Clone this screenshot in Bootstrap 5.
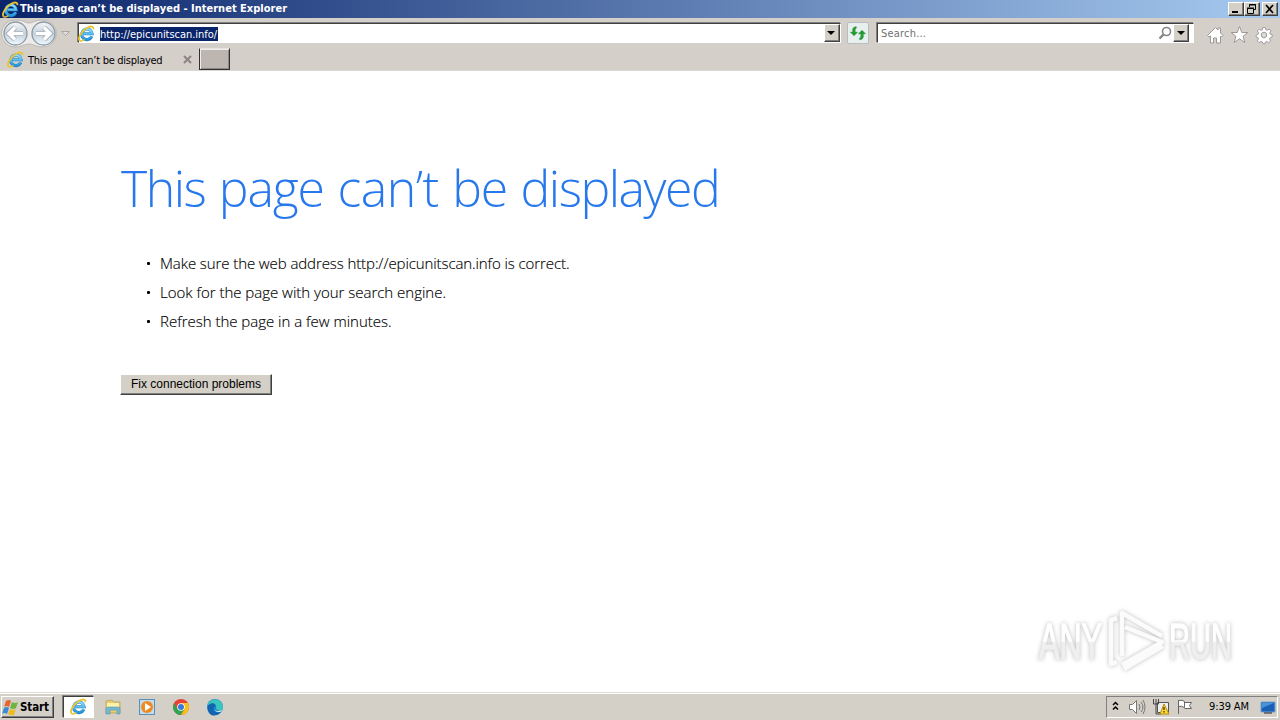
<!DOCTYPE html>
<html lang="en">
<head>
<meta charset="utf-8">
<title>This page can’t be displayed</title>
<link href="https://cdn.jsdelivr.net/npm/bootstrap@5.3.0/dist/css/bootstrap.min.css" rel="stylesheet">
<style>
body{font:11px/14px "DejaVu Sans Condensed","DejaVu Sans",sans-serif;color:#000;background:#fff;overflow:hidden}
svg{display:block;flex:none}
.face{background:#d4d0c8}
.chrome{background:#d5cfca}
.titlebar{height:18px;background:linear-gradient(90deg,#0a246a 0,#a6caf0 100%);color:#fff;padding:0 2px}
.titlebar b{font-size:11px;letter-spacing:.01px;margin-left:1px;white-space:nowrap}
.raised{background:#d4d0c8;border:1px solid;border-color:#fff #404040 #404040 #fff;box-shadow:inset -1px -1px #808080}
.sunken{background:#fff;border:1px solid;border-color:#404040 #fff #fff #404040;box-shadow:-1px -1px #808080}
.capbtn{width:16px;height:14px}
.capclose{margin-left:2px}
.toolbar{height:30px}
.navmenu{width:0}
.navmenu svg{margin-left:-4px}
.address{width:763px;height:20px;margin:1px 0 0 13px}
.address svg{margin-left:-1px}
.address .sel{background:#0a246a;color:#fff;height:14px;line-height:15px;margin:1px 0 0 5px;width:118px;white-space:nowrap;letter-spacing:-.04px}
.drop{width:16px;height:18px}
.refresh{width:22px;height:22px;margin-left:6px;background:#e8efef;border:1px solid #b8bdc0;border-radius:2px}
.search{width:317px;height:20px;margin:1px 0 0 8px;color:#707070;padding-left:3px}
.search span{padding-top:2px;letter-spacing:.2px}
.tabs{height:23px;border-bottom:1px solid #dcd8d4}
.tab-item{width:199px;height:22px;padding-left:7px}
.tabtext{margin-left:4px;padding-top:3px;letter-spacing:-.28px}
.tab-item .closer{margin-right:7px}
.newtab{width:31px;height:22px;background:#bdb5b0;border:1px solid #303030;border-top-color:#e6e2de;box-shadow:inset 1px 1px #eee,inset -1px -1px #908a86}
.viewport{height:621px;padding-left:121px;position:relative}
.headline{font:300 50px/60px "Open Sans","Noto Sans",sans-serif;color:#2778ec;margin:0;padding-top:87px;white-space:nowrap;letter-spacing:-1.5px;word-spacing:2px}
.headline .mid{letter-spacing:-1.15px}
.headline .wide{letter-spacing:-.5px}
.tips{font:300 15px/29px "Open Sans","Noto Sans",sans-serif;margin:31px 0 38px;padding:0 0 0 25px;list-style:none;letter-spacing:-.09px;-webkit-text-stroke:.15px #000}
.tips li+li{letter-spacing:-.01px}
.tips li{display:flex;height:29px;white-space:nowrap}
.tips li::before{content:"";width:3px;height:3px;border-radius:1px;background:#000;margin:13px 10px 0 1px;flex:none}
.fix{width:152px;height:21px;border-radius:0;padding:0;font:12px/17px "Liberation Sans",sans-serif;color:#000;display:block;margin-left:-1px}
.mark-logo{position:absolute;left:1028px;top:529px;overflow:visible}
.mark-logo g{filter:drop-shadow(0 0 2px #bbb)}
.taskbar{height:28px;border-top:1px solid #dedbd6;box-shadow:inset 0 1px #fff;padding:2px 2px 2px 1px}
.start{width:53px;height:22px}
.start b{font-size:11.5px;margin-left:1px;letter-spacing:-.1px}
.running{width:31px;height:22px;margin-left:9px}
.tray{width:172px;height:22px;border:1px solid;border-color:#808080 #fff #fff #808080}
.clock{margin-left:16px;width:42px;white-space:nowrap;letter-spacing:-.1px;padding-top:1px}
</style>
</head>
<body>
<svg width="0" height="0" class="position-absolute">
<defs>
<linearGradient id="eb" x2="0" y2="1"><stop stop-color="#8be0fd"/><stop offset="1" stop-color="#2796dd"/></linearGradient>
<linearGradient id="ball" x2="0" y2="1"><stop stop-color="#f6f8fa"/><stop offset=".5" stop-color="#c5d0da"/><stop offset="1" stop-color="#edf9ff"/></linearGradient>
<symbol id="ie" viewBox="0 0 18 18"><path d="M14.600 12A5.600 5.600 0 1 1 15 9.300H5.800" fill="none" stroke="#2586c8" stroke-width="3.300"/><path d="M14.300 12A5.400 5.400 0 1 1 14.800 9.300H5.800" fill="none" stroke="url(#eb)" stroke-width="2.300"/><path d="M1.800 16.500C-.8 13.800 4 6.200 9.400 3.200c3.500-2.200 7.500-2.400 6.800 1.200" fill="none" stroke="#ecc22d" stroke-width="1.900"/><path d="M1.800 16.500c1.200 1 3.300.2 5-1.100" fill="none" stroke="#ecc22d" stroke-width="1.500"/></symbol>
</defs>
</svg>

<header class="chrome">
<div class="titlebar d-flex align-items-center">
<svg width="17" height="17"><use href="#ie"/></svg><b>This page can’t be displayed - Internet Explorer</b>
<div class="d-flex ms-auto">
<div class="raised capbtn"><svg width="14" height="12"><path d="M3 8h6v2H3z"/></svg></div>
<div class="raised capbtn"><svg width="14" height="12" fill="none" stroke="#000"><path d="M4.500 4V1.500h6v5H9M4 2h7M2.500 5.500h6v5h-6zM2 5h7"/></svg></div>
<div class="raised capbtn capclose"><svg width="14" height="12"><path d="M3 2l7 8M10 2l-7 8" stroke="#000" stroke-width="1.700"/></svg></div>
</div></div>

<div class="toolbar d-flex align-items-start">
<svg width="65" height="30" viewBox="0 18 65 30">
<path d="M15 20C24 20 25 23 29 23s6-3 14-3a13.500 13.500 0 0 1 0 27c-7 0-9-3-14-3s-7 3-14 3a13.500 13.500 0 0 1 0-27" fill="#eeecea" stroke="#bbb7b3"/>
<circle cx="15.500" cy="33.500" r="11.500" fill="url(#ball)" stroke="#8c98a2" stroke-width="1.300"/><circle cx="43.500" cy="33.500" r="11.500" fill="url(#ball)" stroke="#8c98a2" stroke-width="1.300"/>
<g fill="none" stroke="#98a4b0" stroke-width="5"><path d="M23 33.500H10M15 27.500l-6 6 6 6M36 33.500h13M44 27.500l6 6-6 6"/></g>
<g fill="none" stroke="#fff" stroke-width="3.500"><path d="M23 33.500H10M15 27.500l-6 6 6 6M36 33.500h13M44 27.500l6 6-6 6"/></g>
</svg>
<div class="navmenu d-flex pt-1"><svg width="9" height="22"><path d="M.5 9.500h8l-4 4z" fill="#e1ddda" stroke="#aaa6a3"/></svg></div>
<div class="d-flex mt-1"><div class="address sunken d-flex align-items-center">
<svg width="17" height="17"><use href="#ie"/></svg><span class="sel">http://epicunitscan.info/</span>
<div class="raised drop ms-auto"><svg width="14" height="16"><path d="M3 6h8l-4 4z"/></svg></div></div>
<div class="refresh"><svg width="20" height="20"><path d="M8 3.500C4.500 4 4 6.500 4.500 9H2l4 4 4-4H7.500C7 7 7.500 5.500 9 4.500zM12 17c3.500-.5 4-3.500 3.500-6H18l-4-4-4 4h2.500c.5 2 0 3.500-1.500 5z" fill="#229b35" stroke="#75b97c" stroke-width=".4"/></svg></div>
<div class="search sunken d-flex align-items-center"><span>Search...</span>
<svg class="ms-auto" width="16" height="18" fill="none" stroke="#858585"><circle cx="9.500" cy="7.500" r="4" stroke-width="1.600"/><path d="M6.500 10.500l-4 4" stroke-width="2.400"/></svg>
<div class="raised drop me-1"><svg width="14" height="16"><path d="M3 6h8l-4 4z"/></svg></div></div></div>
<svg class="ms-auto me-1" width="70" height="28" viewBox="1206 18 70 28" fill="#fff" stroke="#9b9896">
<path d="M1207.500 35.500l8-8 2.500 2.500v-2h2.500v5l2.500 2.500-1.500 1.500-1-1v7h-4v-5h-3v5h-3v-7l-1.500 1z"/>
<path d="M1239.500 26.500l2.300 6h6l-4.700 3.800 1.700 6.200-5.300-3.700-5.300 3.700 1.700-6.200-4.700-3.800h6z"/>
<g transform="translate(1264 35) scale(.93)"><path d="M-1.500-8h3l.5 2.300 1.500.6 2-1.300 2 2-1.300 2 .6 1.500 2 .4v2.500l-2 .8-.8 1.500 1 2-2 2-2-1.300-1.500.7-.4 1.800h-2l-.8-2-1.500-.6-2 1.300-2-2 1.300-2-.6-1.500-2-.7v-2l2-.8.6-1.500-1.300-2 2-2 2 1.300 1.500-.6z"/><circle r="3" fill="#dcd8d4"/></g></svg>
</div>

<div class="tabs d-flex">
<div class="tab-item d-flex align-items-center"><svg width="17" height="17"><use href="#ie"/></svg><span class="tabtext text-nowrap">This page can’t be displayed</span>
<svg class="closer ms-auto" width="9" height="9"><path d="M1 1l7 7M8 1L1 8" stroke="#8a8582" stroke-width="2"/></svg></div>
<div class="newtab"></div>
</div>
</header>

<main class="viewport">
<h1 class="headline">This <span class="mid">page</span> <span class="wide">can’t</span> <span class="mid">be</span> displayed</h1>
<ul class="tips"><li><span>Make sure the web address http://epicunitscan.info is correct.</span></li><li><span>Look for the page with your search engine.</span></li><li><span>Refresh the page in a few minutes.</span></li></ul>
<button class="raised fix">Fix connection problems</button>
<svg class="mark-logo" width="218" height="82" viewBox="1028 600 218 82" font-family="Liberation Sans Narrow,Liberation Sans,sans-serif" font-size="50">
<defs><linearGradient id="fade" gradientUnits="userSpaceOnUse" x1="0" x2="0" y1="610" y2="670"><stop offset=".52" stop-color="#fff"/><stop offset=".54" stop-color="#efefef"/></linearGradient></defs>
<g fill="url(#fade)" stroke="url(#fade)" stroke-width="1.500">
<text x="1039" y="659" textLength="63" lengthAdjust="spacingAndGlyphs">ANY</text><text x="1169" y="659" textLength="63" lengthAdjust="spacingAndGlyphs">RUN</text>
</g>
<g stroke="#fbfbfb" stroke-width="4.500" fill="none" stroke-linejoin="round"><path d="M1117 618l-6 2v44l6-2M1122 656v-43l40 23M1125 627l37 15-40 23M1124 669l39-23"/></g></svg>
</main>

<footer class="taskbar face d-flex align-items-center">
<div class="raised start d-flex align-items-center"><svg width="17" height="18"><path d="M4 3q3-2 5 0L7 9q-3-2-5 0z" fill="#e76330"/><path d="M10 4q3 2 6 0l-2 6q-3 2-6 0z" fill="#71b341"/><path d="M2 10q3-2 5 0l-2 6q-3-2-5 0z" fill="#388bd7"/><path d="M8 11q3 2 6 0l-2 6q-3 1-6-1z" fill="#efbb25"/></svg><b>Start</b></div>
<div class="sunken running d-flex align-items-center justify-content-center"><svg width="17" height="17"><use href="#ie"/></svg></div>
<svg width="136" height="24" viewBox="94 695 136 24">
<path d="M106 701l6-1 2 2h6v11h-14z" fill="#e8cd71" stroke="#b8994e" stroke-width=".7"/><path d="M107 703h12v4h-12z" fill="#fff2ad"/><path d="M106 714v-5q0-2 3-2h9q2 0 2 2v5h-3v-4h-7v4z" fill="#76b9d2" stroke="#5590a8" stroke-width=".6"/>
<rect x="139.500" y="699.500" width="15" height="15" fill="#c4dbed" stroke="#5792bd"/><circle cx="147" cy="707" r="6" fill="#ef8a20"/><path d="M145 703l6 4-6 4z" fill="#fff"/>
<g transform="translate(181 707)"><circle r="8" fill="#e94235"/><path d="M-6.900-4A8 8 0 0 0 0 8l3.500-6H-3.500z" fill="#2fa553"/><path d="M0 8A8 8 0 0 0 6.900-4H0l3.500 6z" fill="#fbc116"/><circle r="3.800" fill="#fff"/><circle r="3" fill="#3979d8"/></g>
<g transform="translate(215 707)"><circle r="8" fill="#1684ca"/><path d="M-8 0C-7-10 8-10 8 0c0 5-7 4-7 1 2-4-6-7-9-1" fill="#3bc5bc"/><path d="M-7-1c4-6 10-1 6 1-2 3 2 7 7 5C0 12-9 8-7-1" fill="#1264af"/><path d="M-1 1c0 3 4 4 8 2 0 3-8 3-8-2" fill="#d9e8ed"/></g></svg>
<div class="tray d-flex align-items-center ms-auto">
<svg width="86" height="20" viewBox="1107 697 86 20"><path d="M1113 705l2.500-2.500 2.500 2.500M1113 709.500l2.500-2.500 2.500 2.500" fill="none" stroke="#000" stroke-width="1.500"/>
<g fill="#fff" stroke="#777"><path d="M1129.500 704.500h3l4-4v13l-4-4h-3z"/><path d="M1139 704q2 3 0 6M1141 702q4 5 0 10M1143 700q4 7 0 14" fill="none"/></g>
<path d="M1157.500 702.500h11v10h-11z" fill="#eee" stroke="#555"/><path d="M1153.500 699v5h5v-5M1156 699v15h5" fill="none" stroke="#444"/><path d="M1163 704l5 10h-9z" fill="#ffdc31" stroke="#b48b12" transform="translate(1 0)"/><path d="M1164 707v3M1164 711v1.500" stroke="#000"/>
<path d="M1178.500 700v14M1178.500 700.500q4-1 6 1v6q-3-2-6-1M1184.500 702.500h7l-2 3 2 3h-7" fill="#fff" stroke="#666"/></svg>
<span class="clock">9:39 AM</span>
<svg class="ms-auto" width="17" height="16"><path d="M1 3h14v10H1z" fill="#195fb6" stroke="#74a3ca"/><path d="M2 4h12l-12 5z" fill="#4a92da"/><path d="M4 14h8" stroke="#222"/></svg></div>
</footer>
<script src="https://cdn.jsdelivr.net/npm/bootstrap@5.3.0/dist/js/bootstrap.bundle.min.js"></script>
</body>
</html>
